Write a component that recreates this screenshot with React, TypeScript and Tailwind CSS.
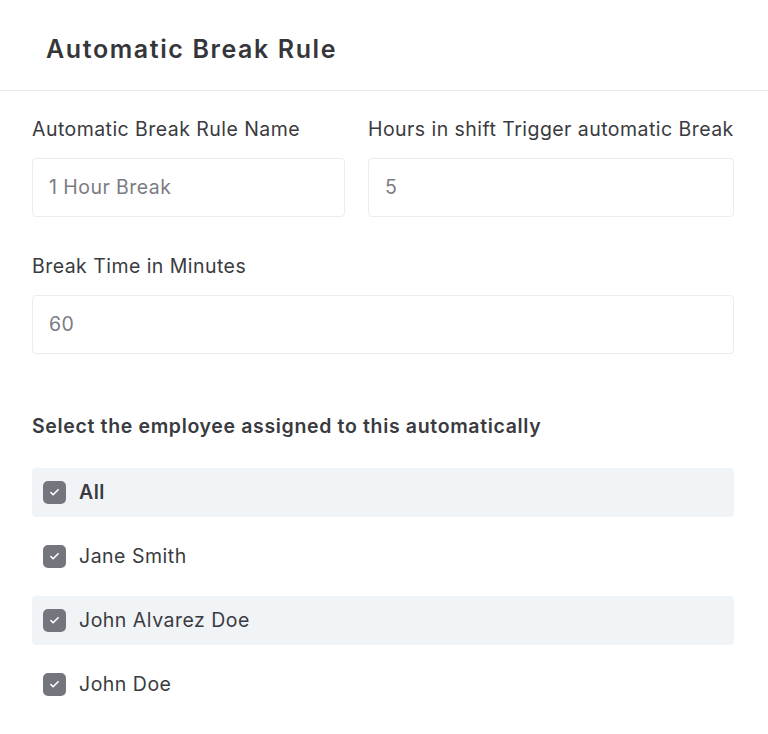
import { Check } from 'lucide-react'

const employees = [
  { name: 'All', bold: true, shaded: true },
  { name: 'Jane Smith', bold: false, shaded: false },
  { name: 'John Alvarez Doe', bold: false, shaded: true },
  { name: 'John Doe', bold: false, shaded: false },
]

function Field({ label, value }: { label: string; value: string }) {
  return (
    <div className="flex flex-col">
      <label className="whitespace-nowrap text-[19.5px] leading-[26px] tracking-[0.45px] text-[#3a3b40]">{label}</label>
      <div className="mt-[16px] h-[59px] rounded-[4px] border border-[#ececee] bg-white px-[16px] flex items-center text-[19.5px] tracking-[0.45px] text-[#7a7c83]">
        {value}
      </div>
    </div>
  )
}

export default function App() {
  return (
    <div className="min-h-screen bg-white font-['Inter','Noto_Sans',sans-serif]">
      {/* ── Header ─────────────────────────────────────── */}
      <div className="h-[91px] border-b border-[#ebebec] pl-[46px] pt-[10px] flex items-center">
        <h1 className="text-[25px] font-semibold tracking-[1.6px] text-[#35363a]">Automatic Break Rule</h1>
      </div>

      <div className="pl-[32px] pr-[34px] pt-[25px]">
        <div className="grid grid-cols-[313px_1fr] gap-x-[23px]">
          <Field label="Automatic Break Rule Name" value="1 Hour Break" />
          <Field label="Hours in shift Trigger automatic Break" value="5" />
        </div>

        <div className="mt-[36px]">
          <Field label="Break Time in Minutes" value="60" />
        </div>

        <h2 className="mt-[59px] text-[19.5px] leading-[26px] tracking-[0.65px] font-semibold text-[#3a3b40]">
          Select the employee assigned to this automatically
        </h2>

        <div className="mt-[29px] flex flex-col gap-[15px]">
          {employees.map(({ name, bold, shaded }) => (
            <div key={name}
              className={`h-[49px] rounded-[4px] pl-[11px] flex items-center gap-[13px] ${shaded ? 'bg-[#f1f4f7]' : ''}`}>
              <span className="w-[23px] h-[23px] rounded-[5px] bg-[#74767d] flex items-center justify-center">
                <Check size={11} strokeWidth={3.5} className="text-white" />
              </span>
              <span className={`text-[19.5px] tracking-[0.5px] text-[#3a3b40] ${bold ? 'font-semibold' : ''}`}>{name}</span>
            </div>
          ))}
        </div>
      </div>
    </div>
  )
}
